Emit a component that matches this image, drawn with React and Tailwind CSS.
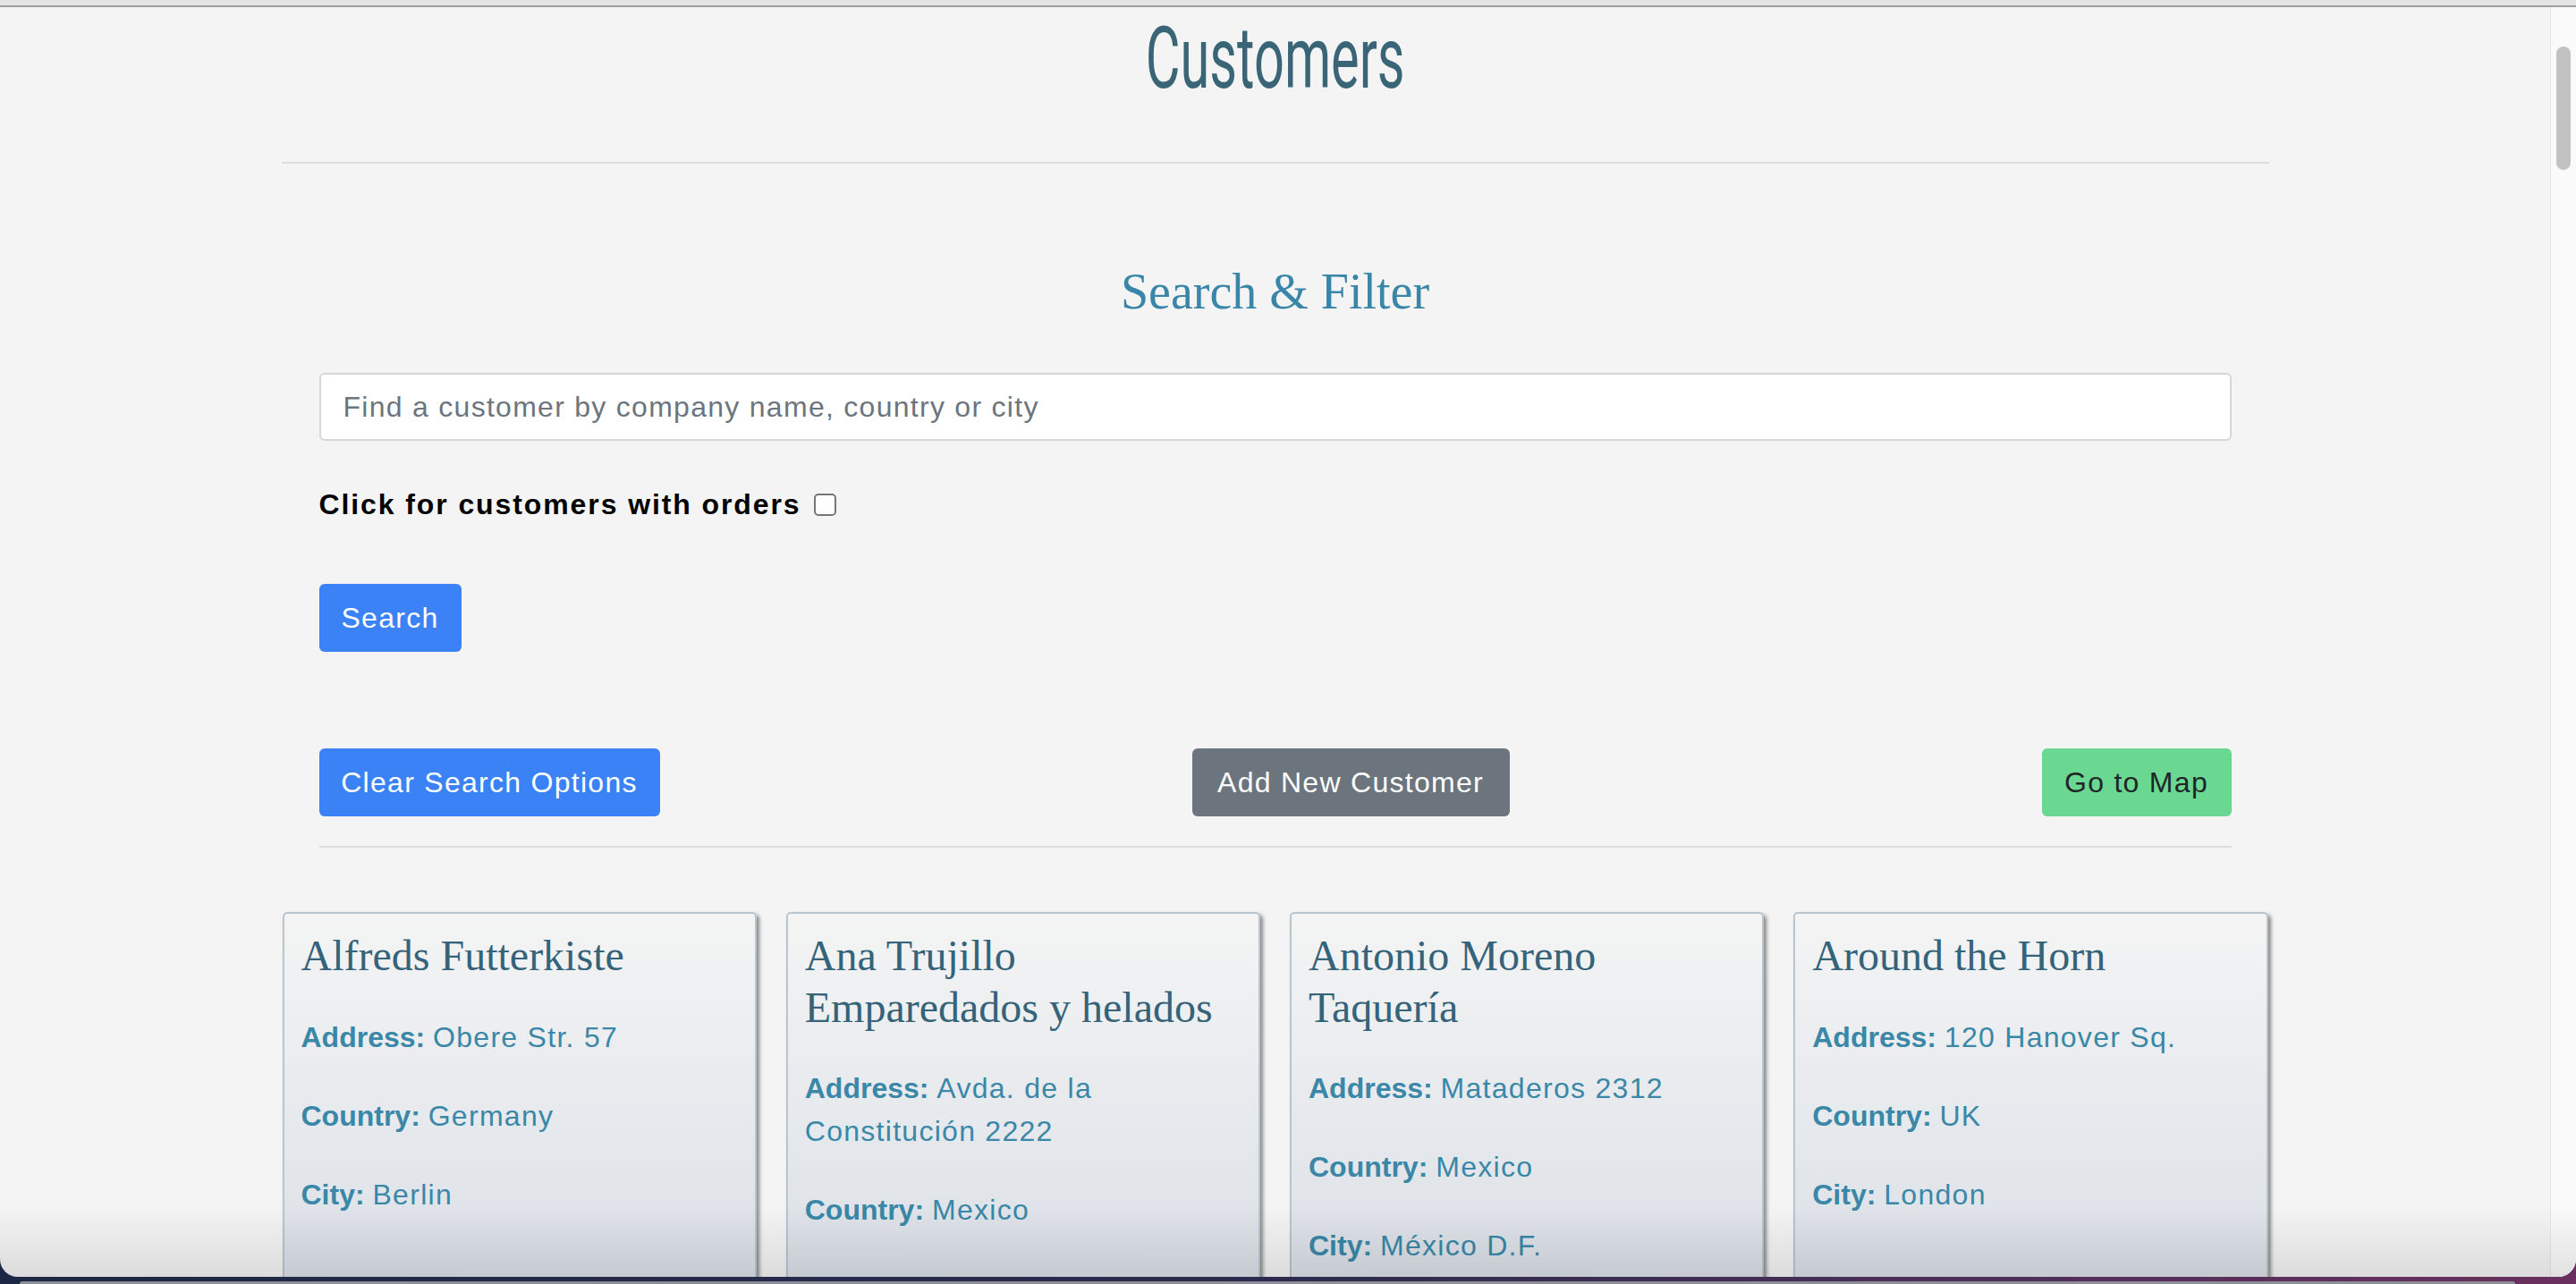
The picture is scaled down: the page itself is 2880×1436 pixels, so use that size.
import { useState } from "react";

const customers = [
    { id: "ALFKI", companyName: "Alfreds Futterkiste", address: "Obere Str. 57", country: "Germany", city: "Berlin" },
    { id: "ANATR", companyName: "Ana Trujillo Emparedados y helados", address: "Avda. de la Constitución 2222", country: "Mexico", city: "México D.F." },
    { id: "ANTON", companyName: "Antonio Moreno Taquería", address: "Mataderos 2312", country: "Mexico", city: "México D.F." },
    { id: "AROUT", companyName: "Around the Horn", address: "120 Hanover Sq.", country: "UK", city: "London" },
];

const sans = "font-['Liberation_Sans',Arial,sans-serif]";
const serif = "font-['Liberation_Serif','Times_New_Roman',serif]";

function CustomerCard({ customer }) {
    return (
        <div className="h-[600px] rounded-[5px] border-2 border-[#b9c5cf] bg-gradient-to-b from-[#f4f4f4] to-[#d0d8e2] px-[19px] pt-[18px] shadow-[3px_3px_4px_rgba(0,0,0,0.45)]">
            <h3 className={`${serif} mb-[38px] text-[48px] leading-[57.6px] text-[#34637a]`}>
                {customer.companyName}
            </h3>
            <p className="mb-[40px] text-[32px] leading-[48px] text-[#3a87a7]">
                <b>Address:</b> <span className="tracking-[1.28px]">{customer.address}</span>
            </p>
            <p className="mb-[40px] text-[32px] leading-[48px] text-[#3a87a7]">
                <b>Country:</b> <span className="tracking-[1.28px]">{customer.country}</span>
            </p>
            <p className="mb-[40px] text-[32px] leading-[48px] text-[#3a87a7]">
                <b>City:</b> <span className="tracking-[1.28px]">{customer.city}</span>
            </p>
        </div>
    );
}

export default function App() {
    const [search, setSearch] = useState("");
    const [withOrders, setWithOrders] = useState(false);

    return (
        <div className="h-[1436px] w-[2880px] overflow-hidden bg-gradient-to-r from-[#1c2745] via-[#2b2a4e] to-[#6a2f5f]">
            {/* browser window */}
            <div className={`${sans} relative flex h-[1428px] flex-col overflow-hidden rounded-b-[20px] bg-[#f4f4f4]`}>
                <div className="h-[6px] bg-[#e4e4e4]" />
                <div className="h-[2px] bg-[#9f9f9f]" />

                <div className="flex min-h-0 flex-1">
                    <main className="min-w-0 flex-1">
                        <div className="mt-[9px] text-center">
                            <h1 className="inline-block origin-center scale-x-[0.62] font-['Roboto',sans-serif] text-[96px] font-normal leading-[96px] text-[#3a6577]">
                                Customers
                            </h1>
                        </div>
                        <div className="mx-auto mt-[68px] h-[2px] w-[2222px] bg-[#dcdcdc]" />

                        <div className="mx-auto w-[2138px]">
                            <h2 className={`${serif} mt-[110px] text-center text-[56px] leading-[67px] text-[#3a86a8]`}>
                                Search &amp; Filter
                            </h2>

                            <input
                                type="text"
                                value={search}
                                onChange={(e) => setSearch(e.target.value)}
                                placeholder="Find a customer by company name, country or city"
                                className="mt-[57px] block h-[76px] w-full rounded-[6px] border-2 border-[#d3d8dd] bg-white px-[25px] text-[32px] tracking-[1.28px] text-[#212529] outline-none placeholder:text-[#6c757d]"
                            />

                            <label className="mt-[47px] flex items-center gap-[14px] text-[32px] font-bold leading-[48px] tracking-[1.9px] text-black">
                                Click for customers with orders
                                <input
                                    type="checkbox"
                                    checked={withOrders}
                                    onChange={() => setWithOrders(!withOrders)}
                                    className="h-[25px] w-[25px] appearance-none rounded-[5px] border-2 border-[#767676] bg-white"
                                />
                            </label>

                            <button className="mt-[65px] flex h-[76px] items-center rounded-[6px] bg-[#3b82f6] px-[25px] text-[32px] tracking-[1.28px] text-white">
                                Search
                            </button>

                            <div className="mt-[108px] flex items-center justify-between">
                                <button className="flex h-[76px] w-[381px] items-center justify-center rounded-[6px] bg-[#3b82f6] text-[32px] tracking-[1.28px] text-white">
                                    Clear Search Options
                                </button>
                                <button className="flex h-[76px] w-[355px] items-center justify-center rounded-[6px] bg-[#6c757d] text-[32px] tracking-[1.28px] text-white">
                                    Add New Customer
                                </button>
                                <button className="flex h-[76px] w-[212px] items-center justify-center rounded-[6px] bg-[#6ad890] text-[32px] tracking-[1.28px] text-[#212529]">
                                    Go to Map
                                </button>
                            </div>
                            <div className="mt-[33px] h-[2px] bg-[#dcdcdc]" />
                        </div>

                        <div className="mx-auto mt-[72px] grid w-[2220px] grid-cols-4 gap-[33px]">
                            {customers.map((c) => (
                                <CustomerCard key={c.id} customer={c} />
                            ))}
                        </div>
                    </main>

                    {/* scrollbar */}
                    <div className="w-[29px] shrink-0 border-l border-[#e6e6e6] bg-[#fafafa] pl-[6px] pt-[44px]">
                        <div className="h-[138px] w-[16px] rounded-full bg-[#c2c2c2]" />
                    </div>
                </div>

                {/* window bottom shade */}
                <div className="pointer-events-none absolute inset-x-0 bottom-0 h-[80px] bg-gradient-to-b from-transparent to-black/10" />
            </div>
            <div className="ml-[22px] mr-[68px] mt-[5px] h-[3px] rounded-t-[4px] bg-[#8e8f96]" />
        </div>
    );
}
